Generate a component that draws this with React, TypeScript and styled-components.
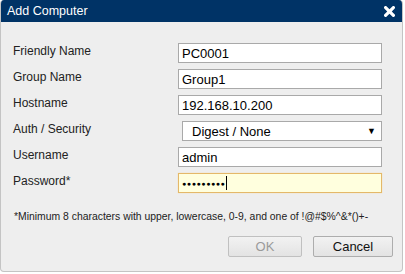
import styled, { createGlobalStyle } from 'styled-components'

const Global = createGlobalStyle`
  html, body {
    margin: 0;
    padding: 0;
    background: #ffffff;
    font-family: "Liberation Sans", Arial, sans-serif;
  }
`

const Dialog = styled.div`
  width: 403px;
  height: 272px;
  box-sizing: border-box;
  background: #eeeeee;
  border: 1px solid #c4c4c4;
  border-top: none;
  border-radius: 4px;
  overflow: hidden;
  display: flex;
  flex-direction: column;
`

const TitleBar = styled.div`
  height: 22px;
  margin: 0 -1px;
  background: #003366;
  color: #ffffff;
  display: flex;
  align-items: center;
  justify-content: space-between;
  padding: 0 8px 0 7px;
  font-size: 12.5px;
`

const Close = styled.svg`
  display: block;
`

const Form = styled.div`
  display: grid;
  grid-template-columns: 165px 204px;
  grid-auto-rows: 20px;
  row-gap: 6px;
  padding: 21px 0 0 12px;
`

const Label = styled.label`
  font-size: 12px;
  color: #222222;
  line-height: 14px;
  margin-top: 1px;
`

const Field = styled.input`
  box-sizing: border-box;
  width: 204px;
  height: 20px;
  margin: 0;
  padding: 0 3px;
  border: 1px solid #a9a9a9;
  border-radius: 0;
  background: #ffffff;
  font-family: "Liberation Sans", Arial, sans-serif;
  font-size: 13px;
  color: #000000;
  outline: none;
`

const Select = styled.div`
  box-sizing: border-box;
  margin-left: 4px;
  width: 200px;
  height: 20px;
  border: 1px solid #a9a9a9;
  background: #ffffff;
  display: flex;
  align-items: center;
  justify-content: space-between;
  padding: 0 5px 0 9px;
  font-size: 13px;
  color: #000000;
`

const Arrow = styled.span`
  font-size: 9px;
`

const Secret = styled.div`
  box-sizing: border-box;
  width: 204px;
  height: 20px;
  border: 1px solid #e4b869;
  box-shadow: 0 0 1px #f0d49a;
  background: #ffffde;
  display: flex;
  align-items: center;
  padding: 0 3px;
  font-size: 7px;
  letter-spacing: 0.6px;
  color: #000000;
`

const Caret = styled.span`
  display: inline-block;
  width: 1px;
  height: 14px;
  background: #000000;
  margin-left: 1px;
`

const Note = styled.div`
  margin: 17px 0 0 13px;
  font-size: 10.4px;
  color: #222222;
  line-height: 13px;
`

const Buttons = styled.div`
  display: flex;
  justify-content: flex-end;
  gap: 11px;
  padding: 13px 9px 0 0;
`

const Button = styled.button<{ $w: number }>`
  width: ${p => p.$w}px;
  height: 21px;
  box-sizing: border-box;
  border: 1px solid #adadad;
  border-radius: 2px;
  background: linear-gradient(#f2f2f2, #e3e3e3);
  font-family: "Liberation Sans", Arial, sans-serif;
  font-size: 13px;
  color: #111111;
  padding: 0;
  &:disabled {
    color: #9a9a9a;
    border-color: #c0c0c0;
  }
`

export default function App() {
  return (
    <>
      <Global />
      <Dialog>
        <TitleBar>
          <span>Add Computer</span>
          <Close width="11" height="11" viewBox="0 0 11 11">
            <path d="M1.6 1.6 L9.4 9.4 M9.4 1.6 L1.6 9.4" stroke="#ffffff" strokeWidth="3.2" strokeLinecap="round" />
          </Close>
        </TitleBar>
        <Form>
          <Label>Friendly Name</Label>
          <Field defaultValue="PC0001" />
          <Label>Group Name</Label>
          <Field defaultValue="Group1" />
          <Label>Hostname</Label>
          <Field defaultValue="192.168.10.200" />
          <Label>Auth / Security</Label>
          <Select>
            <span>Digest / None</span>
            <Arrow>▼</Arrow>
          </Select>
          <Label>Username</Label>
          <Field defaultValue="admin" />
          <Label>Password*</Label>
          <Secret>
            <span>●●●●●●●●●</span>
            <Caret />
          </Secret>
        </Form>
        <Note>*Minimum 8 characters with upper, lowercase, 0-9, and one of !@#$%^&amp;*()+-</Note>
        <Buttons>
          <Button $w={74} disabled>OK</Button>
          <Button $w={80}>Cancel</Button>
        </Buttons>
      </Dialog>
    </>
  )
}
